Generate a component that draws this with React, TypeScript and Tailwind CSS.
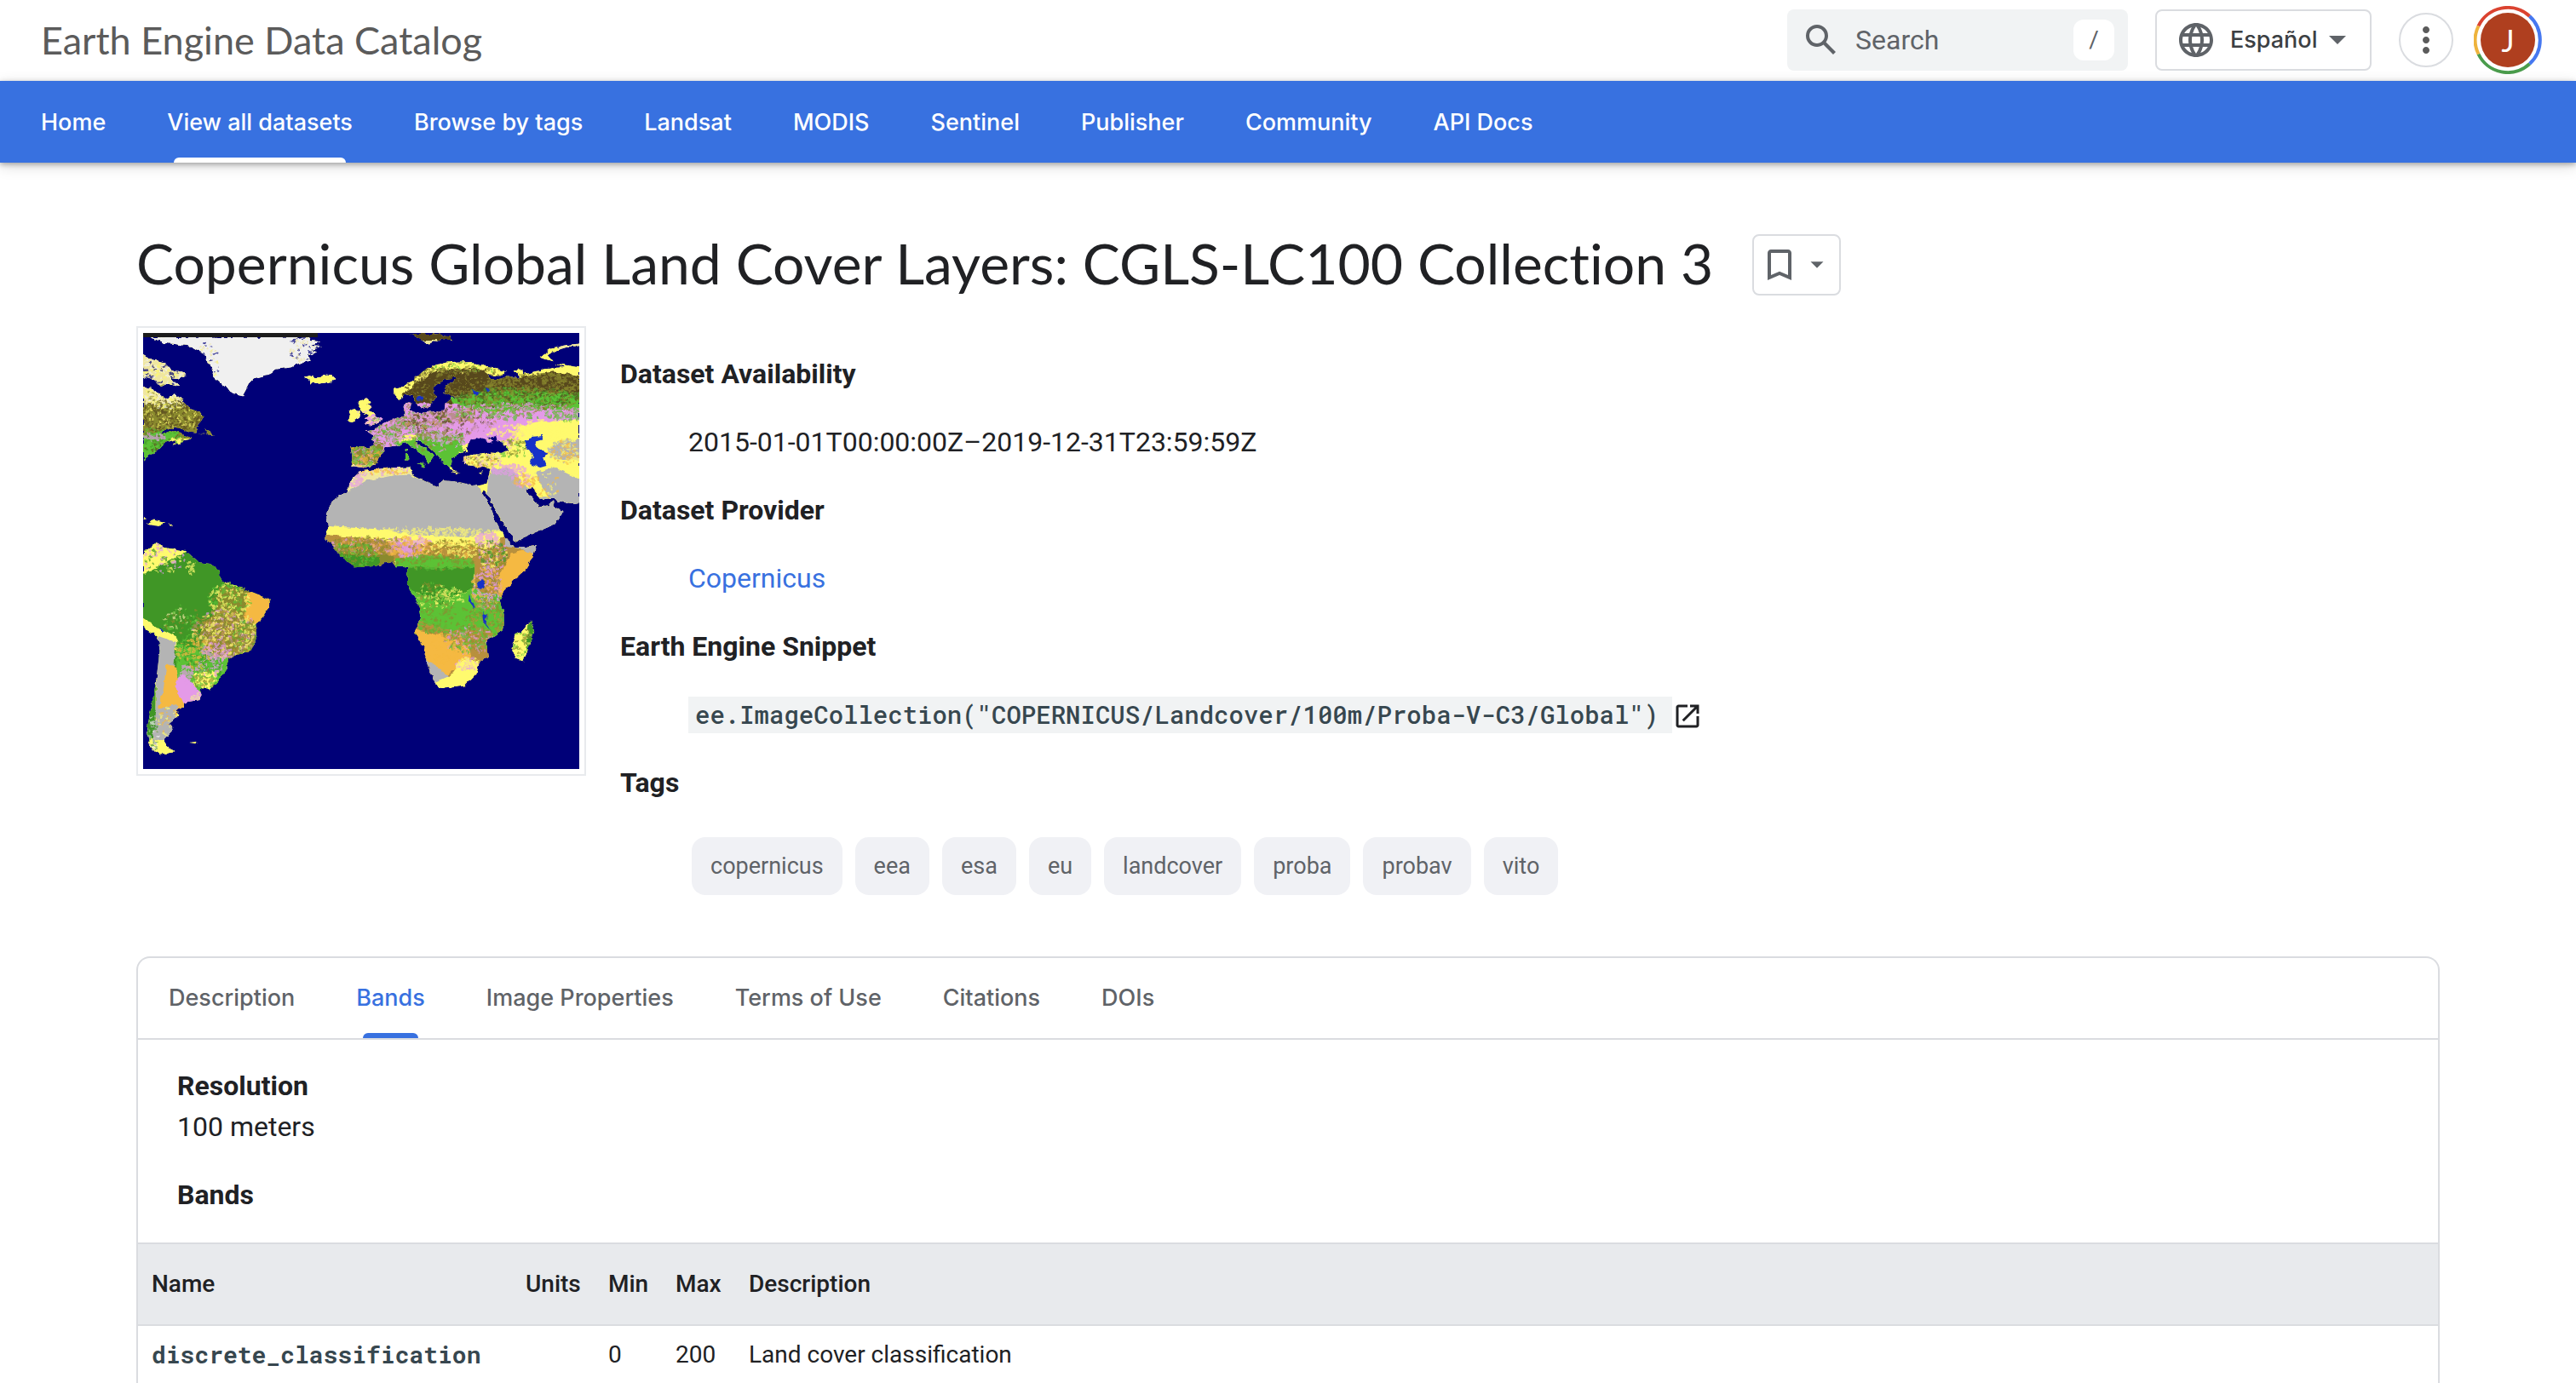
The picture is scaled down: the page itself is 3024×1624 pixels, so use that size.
import React from "react";

const NAV = [
  "Home",
  "View all datasets",
  "Browse by tags",
  "Landsat",
  "MODIS",
  "Sentinel",
  "Publisher",
  "Community",
  "API Docs",
];
const TAGS = ["copernicus", "eea", "esa", "eu", "landcover", "proba", "probav", "vito"];
const TABS = ["Description", "Bands", "Image Properties", "Terms of Use", "Citations", "DOIs"];

/* ---------- Land cover thumbnail ---------- */

const C = {
  sea: "#000078",
  lake: "#1432c8",
  forest: "#3f9626",
  green: "#5cc236",
  taiga: "#58481f",
  olive: "#8a8a2e",
  yellow: "#fffa6e",
  cream: "#efe6a0",
  orange: "#f5b942",
  brown: "#b8903c",
  pink: "#e49ae8",
  gray: "#b4b4b4",
  ice: "#f0f0f0",
};

const LAND = {
  greenland:
    "M76 74L150 73L600 72L598 84L636 88L602 98L638 102L600 114L622 122L590 132L604 150L560 160L540 172L488 178L460 196L414 208L400 222L388 246L378 264L350 258L334 252L322 236L300 218L276 196L280 168L262 158L258 140L240 122L210 104L160 96L120 92Z",
  arctic:
    "M50 132L80 150L120 158L134 176L192 196L170 208L140 204L168 236L130 226L110 236L88 214L50 206Z",
  labrador:
    "M50 238L84 242L110 266L134 276L154 258L180 280L206 308L236 318L250 336L240 352L226 370L222 388L262 392L250 374L272 378L282 396L250 390L200 386L160 366L120 378L110 392L150 378L178 392L210 404L190 414L150 430L158 410L120 420L102 440L80 456L60 466L50 484Z",
  iceland: "M576 204L596 200L618 206L650 198L672 200L684 210L664 222L630 228L600 224L598 212Z",
  britain:
    "M762 282L784 276L800 286L784 296L802 300L790 312L808 322L814 336L838 340L830 354L796 362L778 358L796 346L778 342L790 330L774 320L760 302Z",
  ireland: "M724 318L744 308L764 316L758 340L734 350L718 346L732 334Z",
  scandinavia:
    "M876 242L916 230L944 208L968 184L1010 164L1060 154L1130 152L1140 162L1190 170L1242 186L1232 200L1196 200L1180 190L1196 214L1230 212L1240 204L1290 204L1270 180L1298 178L1296 194L1340 182L1400 174L1440 172L1408 160L1484 172V620L1450 618L1414 612L1390 600L1362 610L1330 568L1310 572L1316 590L1340 614L1350 630L1384 626L1396 612L1404 630L1432 648L1400 690L1340 716L1274 746L1256 716L1230 680L1206 636L1184 592L1170 576L1164 586L1190 624L1210 680L1226 712L1270 768L1344 756L1330 800L1304 842L1262 880L1236 906L1222 936L1236 986L1236 1034L1178 1076L1184 1128L1158 1138L1146 1178L1106 1220L1022 1230L1006 1204L988 1158L972 1096L944 1048L962 1000L956 950L918 884L920 826L884 830L868 808L818 826L746 830L706 802L684 770L650 734L658 700L652 656L676 606L722 582L726 550L764 514L840 504L930 500L934 524L1020 566L1034 544L1080 548L1150 562L1180 554L1192 506L1160 500L1104 492L1100 470L1140 456L1110 450L1106 440L1094 456L1066 470L1062 496L1084 516L1060 508L1030 474L1014 456L980 426L950 410L956 428L984 440L1006 462L988 490L976 462L940 438L914 420L880 430L848 436L830 464L812 494L776 502L732 496L738 470L732 434L796 436L812 430L806 398L780 382L810 378L840 356L880 340L912 330L908 294L928 290L926 316L960 322L1000 318L1040 316L1044 292L1070 270L1126 262L1064 266L1040 258L1046 236L1076 212L1080 206L1040 210L1002 240L1004 256L1016 262L990 300L966 306L946 286L938 266L916 262L892 278L878 262Z",
  novaya: "M1484 94L1430 100L1388 114L1350 138L1396 152L1380 132L1410 116L1450 104L1484 102Z",
  svalbard: "M930 62L1000 62L1060 68L1068 84L1030 78L990 94L962 78Z",
  southAmerica:
    "M50 776L96 752L118 764L190 776L236 814L270 818L300 838L306 880L330 878L380 900L440 924L462 932L466 960L450 986L420 1016L424 1066L400 1108L356 1118L330 1134L326 1160L300 1198L268 1232L236 1226L242 1250L230 1270L184 1276L186 1290L156 1300L172 1312L134 1346L150 1362L118 1396L128 1416L152 1438L110 1444L76 1424L62 1378L72 1310L84 1260L96 1180L106 1090L96 1056L50 1024Z",
  madagascar: "M1326 1002L1336 1030L1318 1090L1300 1138L1272 1130L1264 1100L1276 1046L1300 1036Z",
  sardinia: "M910 454L920 454L922 478L910 478ZM912 440L920 440L918 450Z",
  sicily: "M950 488L978 490L976 500Z",
  cyprus: "M1150 520L1170 516L1160 524Z",
  crete: "M1062 516L1094 518L1076 522Z",
  cuba: "M60 686L86 674L124 684L100 692ZM132 688L150 690L140 694ZM50 664L62 670L50 674Z",
  falklands: "M202 1406L230 1402L222 1410Z",
};

type Patch = [string, string];

/* Flat zones of land cover, painted in order and clipped to the coast line. */
const ZONES: Patch[] = [
  ["M40 60H700V280H40Z", C.ice],
  ["M560 190H700V235H560Z", C.yellow],
  ["M40 130H210V240H40Z", C.cream],
  ["M40 236H300V300L40 300Z", C.cream],
  ["M40 296L200 290L300 330V410L40 400Z", C.olive],
  ["M40 400L130 376L170 390L100 440L40 500Z", C.green],
  ["M700 270H850V370H700Z", C.yellow],
  ["M920 50H1080V82H920Z", C.taiga],
  ["M920 82H1080V104H920Z", C.cream],
  ["M1410 80H1500V112H1410Z", C.cream],
  ["M860 140H1484V300H860Z", C.yellow],
  ["M900 262L960 216L1010 186L1080 176L1150 176L1210 206L1300 204L1400 186L1484 200V280L1200 270L1000 310L940 310Z", C.taiga],
  ["M1060 270L1180 252L1300 250L1484 260V310L1380 320L1200 316L1080 312Z", C.green],
  ["M700 370L900 290L1060 290L1200 318L1484 306V350L1300 370L1290 420L1120 420L940 440L700 500Z", C.pink],
  ["M860 340L1000 322L1140 310L1150 340L1000 372L860 380Z", "#bb8d92"],
  ["M1280 370L1360 350L1484 345V520L1330 470L1270 420Z", C.yellow],
  ["M724 420H840V506H724Z", C.olive],
  ["M880 400L1100 390L1100 500H900Z", C.green],
  ["M880 402L930 392L960 396L940 410L890 420Z", C.yellow],
  ["M1090 450H1260L1484 480V640H1180L1180 500L1100 500Z", C.yellow],
  ["M1420 410H1484V480L1400 470L1380 440Z", C.gray],
  ["M1186 530L1200 506L1240 500L1270 510L1300 560L1360 600L1410 600L1440 640L1400 700L1270 746L1180 590Z", C.gray],
  ["M1340 520L1400 500L1484 540V622H1400L1370 580Z", C.gray],
  ["M640 490H940V540L760 560L700 600Z", C.cream],
  ["M640 700V606L722 582L790 544L870 528L926 526L1020 562L1034 540L1150 560L1200 640L1230 716L1100 730L950 724L820 706Z", C.gray],
  ["M640 694L820 704L950 724L1100 732L1226 710L1230 770L1000 770L640 740Z", C.yellow],
  ["M640 722L820 738L940 756L1100 760L1190 770L1190 860L1140 830L870 812L700 790Z", C.brown],
  ["M640 740L700 760L870 790L884 840L700 840Z", C.olive],
  ["M684 784L760 792L830 800L820 836L700 836Z", C.forest],
  ["M880 800L1010 796L1150 810L1150 850H880Z", C.green],
  ["M900 830L1140 830L1134 900L1080 920L1030 960L960 920L900 900Z", C.forest],
  ["M1140 800L1220 740L1240 720L1280 768L1350 750L1330 830L1230 930H1140Z", C.brown],
  ["M1262 782L1340 768L1320 840L1220 930L1216 870Z", C.orange],
  ["M1240 722L1272 770L1350 750L1340 785L1290 772L1240 760Z", C.gray],
  ["M930 900L1030 950L1130 900L1250 930V1060H930Z", C.green],
  ["M940 1000L1060 1036L1200 1040V1150L1100 1240H930Z", C.brown],
  ["M940 1030L1040 1060L1120 1080L1130 1130L1040 1190L970 1120Z", C.orange],
  ["M968 1120L1056 1190L1030 1240H980Z", C.gray],
  ["M1012 1206L1070 1180L1090 1130L1150 1140L1160 1180L1100 1230H1012Z", C.yellow],
  ["M40 740H520V1120L300 1240H160L40 1030Z", C.forest],
  ["M40 740H120L200 776L150 800L60 850H40Z", C.yellow],
  ["M300 890L400 900L430 1000L400 1120L330 1150L240 1100L240 1030L290 970Z", C.olive],
  ["M390 910L430 912L470 930L470 970L420 1020L380 1000Z", C.orange],
  ["M160 1080L330 1130L300 1250H160Z", C.green],
  ["M40 990L100 1030L160 1060V1100L130 1110L90 1060L40 1040Z", C.yellow],
  ["M100 1056L158 1076L150 1180L120 1300L90 1300Z", C.gray],
  ["M126 1150L160 1160L170 1220L190 1280L150 1330L94 1310L116 1240Z", C.orange],
  ["M152 1210L180 1180L244 1246L240 1280L180 1276Z", C.pink],
  ["M214 1180L300 1170L270 1240L230 1220Z", C.yellow],
  ["M84 1300L160 1280L156 1380L110 1400L76 1390Z", C.gray],
  ["M60 1240L92 1180L90 1300L82 1400L60 1380Z", C.forest],
  ["M60 1396L160 1400V1450H60Z", C.yellow],
  ["M1250 990H1350V1150H1250Z", C.yellow],
  ["M1318 1000H1350V1060L1310 1120Z", C.forest],
];

/* Speckled regions: centre x, centre y, radius x, radius y, count, grain, colours. */
const GRAIN: [number, number, number, number, number, number, string[]][] = [
  [120, 190, 90, 60, 160, 8, [C.yellow, C.ice, C.sea]],
  [260, 160, 40, 70, 50, 7, [C.yellow, C.cream, C.sea]],
  [590, 110, 60, 50, 70, 7, [C.sea, C.cream]],
  [130, 270, 110, 40, 160, 8, [C.ice, C.yellow, C.olive]],
  [150, 330, 130, 50, 420, 7, [C.taiga, C.yellow, C.olive, C.taiga]],
  [100, 410, 90, 40, 160, 7, [C.forest, C.taiga, C.green]],
  [80, 404, 40, 12, 30, 8, [C.pink]],
  [1080, 170, 180, 22, 180, 7, [C.yellow, C.green, C.olive]],
  [1000, 230, 90, 60, 260, 7, [C.taiga, C.olive, C.taiga]],
  [1120, 220, 120, 44, 260, 7, [C.taiga, C.olive, C.taiga]],
  [1340, 225, 180, 34, 420, 8, [C.taiga, C.olive, C.olive]],
  [1290, 275, 220, 36, 620, 8, [C.green, C.forest, C.taiga, C.olive]],
  [930, 350, 130, 60, 420, 8, [C.pink, C.olive, C.pink, C.green]],
  [1060, 350, 150, 50, 420, 8, [C.pink, C.brown, C.pink, C.taiga]],
  [1270, 318, 220, 26, 360, 9, [C.pink, C.olive, C.pink, C.green]],
  [1120, 390, 150, 36, 220, 11, [C.pink]],
  [1020, 410, 90, 40, 120, 9, [C.green, C.pink, C.olive]],
  [1240, 400, 60, 40, 90, 9, [C.pink, C.yellow]],
  [1440, 330, 60, 22, 80, 9, [C.pink, C.green]],
  [1380, 385, 120, 40, 160, 9, [C.yellow]],
  [780, 465, 60, 40, 190, 9, [C.pink, C.olive, C.orange, C.green]],
  [850, 400, 60, 40, 140, 8, [C.green, C.olive, C.pink]],
  [800, 320, 50, 50, 70, 8, [C.pink, C.yellow, C.cream]],
  [1160, 478, 70, 26, 110, 8, [C.pink, C.orange, C.olive, C.cream]],
  [1270, 440, 70, 30, 110, 8, [C.green, C.olive, C.yellow]],
  [1250, 510, 60, 20, 80, 9, [C.pink]],
  [1300, 545, 40, 24, 50, 9, [C.pink, C.orange]],
  [1370, 560, 50, 40, 30, 8, [C.orange, C.yellow]],
  [1440, 450, 60, 40, 120, 8, [C.gray, C.yellow, C.orange]],
  [1470, 500, 30, 30, 60, 9, [C.yellow]],
  [830, 512, 110, 16, 130, 8, [C.pink, C.yellow, C.orange]],
  [740, 545, 30, 24, 40, 9, [C.pink]],
  [940, 715, 300, 14, 240, 8, [C.yellow]],
  [800, 760, 150, 30, 340, 9, [C.pink, C.orange, C.brown, C.olive]],
  [930, 765, 70, 36, 160, 11, [C.pink, C.pink, C.orange]],
  [1080, 770, 110, 30, 240, 9, [C.orange, C.brown, C.olive, C.yellow]],
  [740, 790, 80, 40, 160, 8, [C.forest, C.olive, C.green]],
  [1010, 815, 130, 24, 180, 9, [C.green, C.olive, C.green]],
  [1180, 740, 40, 24, 50, 10, [C.pink]],
  [1200, 790, 50, 50, 130, 9, [C.pink, C.olive, C.yellow, C.forest]],
  [1180, 900, 50, 70, 190, 9, [C.pink, C.olive, C.pink, C.orange]],
  [1000, 930, 60, 50, 100, 8, [C.yellow, C.green, C.olive]],
  [1060, 930, 50, 34, 60, 9, [C.yellow, C.green]],
  [1050, 1000, 120, 50, 220, 9, [C.green, C.olive, C.green, C.green]],
  [1180, 1000, 60, 70, 170, 8, [C.green, C.olive, C.brown]],
  [1120, 1070, 80, 44, 220, 9, [C.olive, C.pink, C.brown, C.green]],
  [1050, 1100, 70, 50, 60, 9, [C.orange]],
  [1120, 1150, 40, 24, 50, 9, [C.pink, C.yellow]],
  [110, 800, 80, 50, 90, 9, [C.yellow, C.forest, C.pink]],
  [204, 834, 14, 20, 16, 9, [C.yellow]],
  [330, 940, 70, 60, 200, 9, [C.olive, C.green, C.yellow]],
  [170, 1000, 60, 50, 50, 8, [C.cream, C.olive, C.green]],
  [320, 1050, 110, 80, 460, 9, [C.pink, C.olive, C.brown, C.yellow]],
  [390, 1060, 50, 60, 120, 8, [C.green, C.yellow, C.olive]],
  [215, 1110, 60, 60, 180, 9, [C.green, C.forest, C.orange]],
  [290, 1110, 50, 30, 70, 9, [C.pink]],
  [280, 1160, 60, 30, 110, 8, [C.forest, C.green, C.pink]],
  [250, 1200, 40, 30, 90, 8, [C.yellow, C.olive, C.green]],
  [190, 1180, 20, 30, 30, 10, [C.pink]],
  [225, 1260, 20, 16, 24, 8, [C.cream]],
  [130, 1340, 50, 50, 60, 8, [C.gray, C.yellow, C.orange]],
  [80, 1370, 20, 70, 60, 8, [C.ice, C.forest, C.gray]],
  [1296, 1080, 30, 60, 70, 8, [C.green, C.yellow, C.olive]],
];

const BLACK_SEA =
  "M1112 436L1128 414L1146 404L1170 410L1186 420L1204 416L1180 406L1210 398L1214 412L1244 430L1250 446L1228 456L1190 452L1160 458L1120 456Z";
const LAKES: string[] = [
  "M1304 410L1330 400L1364 398L1362 410L1340 416L1346 440L1366 446L1382 456L1364 466L1376 496L1354 502L1322 490L1330 464L1312 434Z",
  "M1150 878L1164 872L1172 884L1162 902L1148 896Z",
  "M1122 918L1130 940L1142 962L1134 962L1120 940Z",
  "M1168 974L1180 990L1178 1016L1190 1038L1176 1020L1170 1000Z",
  "M1130 248L1158 252L1150 262L1134 260Z",
  "M1174 238L1194 244L1184 254Z",
  "M950 270L968 268L966 278L952 280Z",
  "M104 1028L120 1040L112 1044Z",
];

function speckles() {
  let s = 20190101;
  const rnd = () => {
    s = (s * 1664525 + 1013904223) % 4294967296;
    return s / 4294967296;
  };
  return GRAIN.flatMap(([cx, cy, rx, ry, n, size, colours]) => {
    const d = colours.map(() => "");
    for (let i = 0; i < n * 1.4; i++) {
      const a = rnd() * Math.PI * 2;
      const r = Math.sqrt(rnd());
      const w = Math.round(size * (0.4 + rnd() * 0.8));
      const h = Math.round(size * (0.4 + rnd() * 0.6));
      const x = Math.round(cx + Math.cos(a) * r * rx - w / 2);
      const y = Math.round(cy + Math.sin(a) * r * ry - h / 2);
      d[i % colours.length] += `M${x} ${y}l${w} ${-2}l${2} ${h}l${-w} ${2}z`;
    }
    return colours.map((c, i): Patch => [d[i], c]);
  });
}
const SPECKLES = speckles();

function LandCoverMap() {
  return (
    <svg viewBox="50 59 1434 1434" role="img" aria-label="Global land cover thumbnail" className="block size-[512px]">
      <defs>
        <clipPath id="land">
          {Object.entries(LAND).map(([k, d]) => (
            <path key={k} d={d} />
          ))}
        </clipPath>
        <filter id="coast" x="-2%" y="-2%" width="104%" height="104%">
          <feTurbulence type="fractalNoise" baseFrequency="0.05" numOctaves="2" seed="4" result="n" />
          <feDisplacementMap in="SourceGraphic" in2="n" scale="16" xChannelSelector="R" yChannelSelector="G" />
          <feGaussianBlur stdDeviation="2" />
        </filter>
      </defs>
      <rect x="50" y="59" width="1434" height="1434" fill={C.sea} />
      <g filter="url(#coast)">
        <g clipPath="url(#land)">
          <rect x="40" y="50" width="1454" height="1454" fill={C.yellow} />
          {ZONES.map(([d, c], i) => (
            <path key={i} d={d} fill={c} />
          ))}
          {SPECKLES.map(([d, c], i) => (
            <path key={i} d={d} fill={c} fillOpacity="0.7" />
          ))}
        </g>
        <path d={BLACK_SEA} fill={C.sea} />
        {LAKES.map((d) => (
          <path key={d} d={d} fill={C.lake} />
        ))}
      </g>
      <rect x="50" y="59" width="574" height="14" fill="#1c1c1c" />
    </svg>
  );
}

/* ---------- Icons ---------- */

const ICON = {
  search:
    "M20.49 19l-5.73-5.73C15.53 12.2 16 10.91 16 9.5A6.5 6.5 0 1 0 9.5 16c1.41 0 2.7-.47 3.77-1.24L19 20.49 20.49 19zM5 9.5C5 7.01 7.01 5 9.5 5S14 7.01 14 9.5 11.99 14 9.5 14 5 11.99 5 9.5z",
  globe:
    "M11.99 2C6.47 2 2 6.48 2 12s4.47 10 9.99 10C17.52 22 22 17.52 22 12S17.52 2 11.99 2zm6.93 6h-2.95c-.32-1.25-.78-2.45-1.38-3.56 1.84.63 3.37 1.91 4.33 3.56zM12 4.04c.83 1.2 1.48 2.53 1.91 3.96h-3.82c.43-1.43 1.08-2.76 1.91-3.96zM4.26 14C4.1 13.36 4 12.69 4 12s.1-1.36.26-2h3.38c-.08.66-.14 1.32-.14 2s.06 1.34.14 2H4.26zm.82 2h2.95c.32 1.25.78 2.45 1.38 3.56-1.84-.63-3.37-1.9-4.33-3.56zm2.95-8H5.08c.96-1.66 2.49-2.93 4.33-3.56C8.81 5.55 8.35 6.75 8.03 8zM12 19.96c-.83-1.2-1.48-2.53-1.91-3.96h3.82c-.43 1.43-1.08 2.76-1.91 3.96zM14.34 14H9.66c-.09-.66-.16-1.32-.16-2s.07-1.35.16-2h4.68c.09.65.16 1.32.16 2s-.07 1.34-.16 2zm.25 5.56c.6-1.11 1.06-2.31 1.38-3.56h2.95c-.96 1.65-2.49 2.93-4.33 3.56zM16.36 14c.08-.66.14-1.32.14-2s-.06-1.34-.14-2h3.38c.16.64.26 1.31.26 2s-.1 1.36-.26 2h-3.38z",
  more: "M12 8c1.1 0 2-.9 2-2s-.9-2-2-2-2 .9-2 2 .9 2 2 2zm0 2c-1.1 0-2 .9-2 2s.9 2 2 2 2-.9 2-2-.9-2-2-2zm0 6c-1.1 0-2 .9-2 2s.9 2 2 2 2-.9 2-2-.9-2-2-2z",
  bookmark: "M17 3H7c-1.1 0-2 .9-2 2v16l7-3 7 3V5c0-1.1-.9-2-2-2zm0 15l-5-2.18L7 18V5h10v13z",
  open: "M19 19H5V5h7V3H5c-1.11 0-2 .9-2 2v14c0 1.1.89 2 2 2h14c1.1 0 2-.9 2-2v-7h-2v7zM14 3v2h3.59l-9.83 9.83 1.41 1.41L19 6.41V10h2V3h-7z",
  down: "M7 9.5l5 5 5-5z",
};

function Icon({ d, className }: { d: string; className: string }) {
  return (
    <svg viewBox="0 0 24 24" fill="currentColor" aria-hidden="true" className={className}>
      <path d={d} />
    </svg>
  );
}

function Avatar() {
  const arc = "fill-none stroke-4";
  return (
    <button type="button" aria-label="Account" className="relative grid size-20 place-items-center">
      <svg viewBox="0 0 80 80" className="absolute inset-0 size-20" aria-hidden="true">
        <path d="M5.5 23.5A38 38 0 0 1 65.5 12" stroke="#db4330" className={arc} />
        <path d="M65.5 12A38 38 0 0 1 65.5 68" stroke="#4678f0" className={arc} />
        <path d="M65.5 68A38 38 0 0 1 5.5 56.5" stroke="#4a9c4c" className={arc} />
        <path d="M5.5 56.5A38 38 0 0 1 5.5 23.5" stroke="#eeb33c" className={arc} />
        <circle cx="40" cy="40" r="32" fill="#af3f1f" />
      </svg>
      <span className="relative font-['Lato',sans-serif] text-[36px] leading-none text-white">J</span>
    </button>
  );
}

/* ---------- Page ---------- */

function Header() {
  return (
    <header>
      <div className="flex h-[95px] items-center pr-10 pb-0.5 pl-12">
        <a
          href="#catalog"
          className="font-['Lato',sans-serif] text-[45px] leading-[64px] text-[#5b5b5b] [font-variant-ligatures:none]"
        >
          Earth Engine Data Catalog
        </a>
        <div className="ml-auto flex items-center">
          <label className="flex h-[72px] w-[400px] items-center gap-4 rounded-lg bg-[#f1f3f4] px-4 text-[#5f6368]">
            <Icon d={ICON.search} className="size-12 shrink-0" />
            <input
              type="search"
              aria-label="Search"
              placeholder="Search"
              className="w-0 flex-1 bg-transparent text-[32px] outline-none placeholder:text-[#5f6368]"
            />
            <kbd className="grid size-12 place-items-center rounded-xl bg-white font-['Roboto',sans-serif] text-[28px]">/</kbd>
          </label>
          <label className="relative ml-8 flex h-[72px] w-[254px] items-center rounded-lg border-2 border-[#dadce0] pl-[22px] text-[#5f6368]">
            <Icon d={ICON.globe} className="size-12 shrink-0" />
            <select
              aria-label="Language"
              className="h-full flex-1 appearance-none bg-transparent pl-4 font-['Inter',sans-serif] text-[27px] font-medium text-[#3c4043] outline-none"
            >
              <option>Español</option>
            </select>
            <Icon d={ICON.down} className="pointer-events-none absolute right-3.5 size-12" />
          </label>
          <button
            type="button"
            aria-label="More options"
            className="ml-8 grid size-16 place-items-center rounded-full border-2 border-[#dadce0] text-[#5b5b5b]"
          >
            <Icon d={ICON.more} className="size-12" />
          </button>
          <div className="ml-6">
            <Avatar />
          </div>
        </div>
      </div>
      <nav className="relative flex h-24 gap-[72px] bg-[#3871e0] px-12 font-['Inter',sans-serif] text-[27px] font-medium text-white shadow-[0_2px_6px_rgba(0,0,0,0.3),0_4px_16px_rgba(0,0,0,0.15)]">
        {NAV.map((n, i) => (
          <a key={n} href={"#" + n.replace(/ /g, "-").toLowerCase()} className="relative flex items-center pt-0.5 whitespace-nowrap">
            {n}
            {i === 1 && <span className="absolute inset-x-2 bottom-0 h-1.5 rounded-t-md bg-white" />}
          </a>
        ))}
      </nav>
    </header>
  );
}

const dt = "font-bold";
const dd = "ml-20";

function Summary() {
  return (
    <section className="mt-8 flex gap-10">
      <div className="h-max shrink-0 border-2 border-[#e8eaed] p-1.5">
        <LandCoverMap />
      </div>
      <dl className="flex flex-col gap-8 pt-8">
        <dt className={dt}>Dataset Availability</dt>
        <dd className={dd}>2015-01-01T00:00:00Z–2019-12-31T23:59:59Z</dd>
        <dt className={dt}>Dataset Provider</dt>
        <dd className={dd}>
          <a href="#copernicus" className="text-[#3871e0]">
            Copernicus
          </a>
        </dd>
        <dt className={dt}>Earth Engine Snippet</dt>
        <dd className="ml-20 flex h-12 items-center">
          <code className="bg-[#f1f3f4] pr-4 pl-2 font-['Roboto_Mono','DejaVu_Sans_Mono',monospace] text-[29px] leading-[43px] font-medium text-[#37474f]">
            ee.ImageCollection("COPERNICUS/Landcover/100m/Proba-V-C3/Global")
          </code>
          <a href="#code-editor" aria-label="Open in Code Editor" className="pt-1">
            <Icon d={ICON.open} className="size-9" />
          </a>
        </dd>
        <dt className={dt}>Tags</dt>
        <dd className="mt-2 ml-[84px] flex gap-[15px]">
          {TAGS.map((t) => (
            <a
              key={t}
              href={"#tag-" + t}
              className="rounded-2xl bg-[#f0f1f5] px-[22px] text-[27px] leading-[68px] text-[#5f6368]"
            >
              {t}
            </a>
          ))}
        </dd>
      </dl>
    </section>
  );
}

function BandsCard() {
  return (
    <section className="mt-[72px] rounded-t-2xl border-2 border-b-0 border-[#dadce0]">
      <div
        role="tablist"
        className="flex h-[94px] gap-[72px] px-9 font-['Inter',sans-serif] text-[27px] font-medium text-[#5f6368]"
      >
        {TABS.map((t, i) => (
          <button
            key={t}
            type="button"
            role="tab"
            aria-selected={i === 1}
            className={i === 1 ? "relative whitespace-nowrap text-[#3871e0]" : "relative whitespace-nowrap"}
          >
            {t}
            {i === 1 && <span className="absolute inset-x-2 bottom-0 h-1.5 rounded-t-md bg-[#3871e0]" />}
          </button>
        ))}
      </div>
      <div className="border-t-2 border-[#dadce0] px-[46px] pt-[30px] pb-8">
        <h3 className="font-bold">Resolution</h3>
        <p>100 meters</p>
        <h3 className="mt-8 font-bold">Bands</h3>
      </div>
      <table className="w-full table-fixed border-collapse text-left text-[28px]">
        <colgroup>
          <col className="w-[439px]" />
          <col className="w-[97px]" />
          <col className="w-[79px]" />
          <col className="w-[86px]" />
          <col />
        </colgroup>
        <thead>
          <tr className="h-24 border-y-2 border-[#dadce0] bg-[#e8eaed]">
            {["Name", "Units", "Min", "Max", "Description"].map((h) => (
              <th key={h} className="px-4 font-medium">
                {h}
              </th>
            ))}
          </tr>
        </thead>
        <tbody>
          <tr>
            <td className="px-4 py-3.5 font-['Roboto_Mono','DejaVu_Sans_Mono',monospace] leading-10 font-bold text-[#37474f]">
              discrete_classification
            </td>
            <td />
            <td className="px-4 leading-10">0</td>
            <td className="px-4 leading-10">200</td>
            <td className="px-4 leading-10">Land cover classification</td>
          </tr>
        </tbody>
      </table>
    </section>
  );
}

export default function App() {
  return (
    <div className="h-screen overflow-hidden bg-white font-['Roboto',sans-serif] text-[32px] leading-[48px] text-[#202124]">
      <Header />
      <main className="px-40 pt-20">
        <div className="flex items-center gap-[46px]">
          <h1 className="pb-1 font-['Lato',sans-serif] text-[66px] leading-[76px] [font-variant-ligatures:none]">
            Copernicus Global Land Cover Layers: CGLS-LC100 Collection 3
          </h1>
          <button
            type="button"
            aria-label="Save page"
            className="flex h-[72px] w-[104px] shrink-0 items-center justify-between rounded-lg border-2 border-[#dadce0] pr-2 pl-1.5 text-[#5f6368]"
          >
            <Icon d={ICON.bookmark} className="size-12" />
            <Icon d={ICON.down} className="size-9" />
          </button>
        </div>
        <Summary />
        <BandsCard />
      </main>
    </div>
  );
}
